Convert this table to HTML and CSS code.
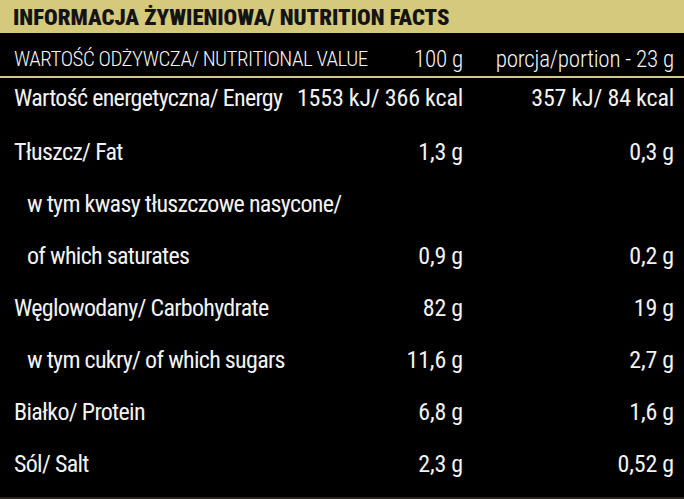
FILE: index.html
```html
<!DOCTYPE html>
<html lang="pl">
<head>
<meta charset="utf-8">
<title>Informacja żywieniowa</title>
<link rel="stylesheet" href="styles.css">
</head>
<body>
<div class="panel">
  <div class="title">INFORMACJA ŻYWIENIOWA/ NUTRITION FACTS</div>
  <div class="grid subhead">
    <div class="label">WARTOŚĆ ODŻYWCZA/ NUTRITIONAL VALUE</div>
    <div class="val">100 g</div>
    <div class="val">porcja/portion - 23 g</div>
  </div>
  <div class="rows">
    <div class="grid row first">
      <div class="label">Wartość energetyczna/ Energy</div>
      <div class="val">1553 kJ/ 366 kcal</div>
      <div class="val">357 kJ/ 84 kcal</div>
    </div>
    <div class="grid row">
      <div class="label">Tłuszcz/ Fat</div>
      <div class="val">1,3 g</div>
      <div class="val">0,3 g</div>
    </div>
    <div class="grid row">
      <div class="label sub">w tym kwasy tłuszczowe nasycone/</div>
      <div class="val"></div>
      <div class="val"></div>
    </div>
    <div class="grid row">
      <div class="label sub">of which saturates</div>
      <div class="val">0,9 g</div>
      <div class="val">0,2 g</div>
    </div>
    <div class="grid row">
      <div class="label">Węglowodany/ Carbohydrate</div>
      <div class="val">82 g</div>
      <div class="val">19 g</div>
    </div>
    <div class="grid row">
      <div class="label sub">w tym cukry/ of which sugars</div>
      <div class="val">11,6 g</div>
      <div class="val">2,7 g</div>
    </div>
    <div class="grid row">
      <div class="label">Białko/ Protein</div>
      <div class="val">6,8 g</div>
      <div class="val">1,6 g</div>
    </div>
    <div class="grid row">
      <div class="label">Sól/ Salt</div>
      <div class="val">2,3 g</div>
      <div class="val">0,52 g</div>
    </div>
  </div>
</div>
</body>
</html>
```
FILE: styles.css
```css
html, body {
  margin: 0;
  padding: 0;
  background: #000;
}
body {
  width: 684px;
  height: 499px;
  overflow: hidden;
  font-family: "Roboto", "DejaVu Sans Condensed", sans-serif;
  font-stretch: 75%;
  color: #f3f3f3;
}
.panel {
  height: 497px;
  border-bottom: 2px solid #2a2419;
}
.title {
  background: #d5ca7c;
  color: #141414;
  font-weight: 900;
  font-size: 22.7px;
  line-height: 30px;
  height: 30px;
  padding: 3px 0 0 13px;
  white-space: nowrap;
}
.grid {
  display: grid;
  grid-template-columns: minmax(0, 1fr) 180px 211px;
  padding: 0 10px 0 14px;
  white-space: nowrap;
}
.subhead {
  font-size: 21px;
  font-weight: 300;
  letter-spacing: -0.5px;
  line-height: 33px;
  height: 33px;
  padding-top: 10px;
  border-bottom: 2px solid #d2c888;
  color: #f6f6f6;
}
.subhead .val {
  font-size: 23px;
  letter-spacing: -0.2px;
}
.val {
  text-align: right;
}
.rows {
  padding-top: 5px;
}
.row {
  font-size: 24px;
  letter-spacing: -0.7px;
  line-height: 30px;
  height: 52px;
}
.row .val {
  letter-spacing: -0.2px;
}
.row.first {
  height: 54px;
}
.label.sub {
  padding-left: 13px;
}
```
